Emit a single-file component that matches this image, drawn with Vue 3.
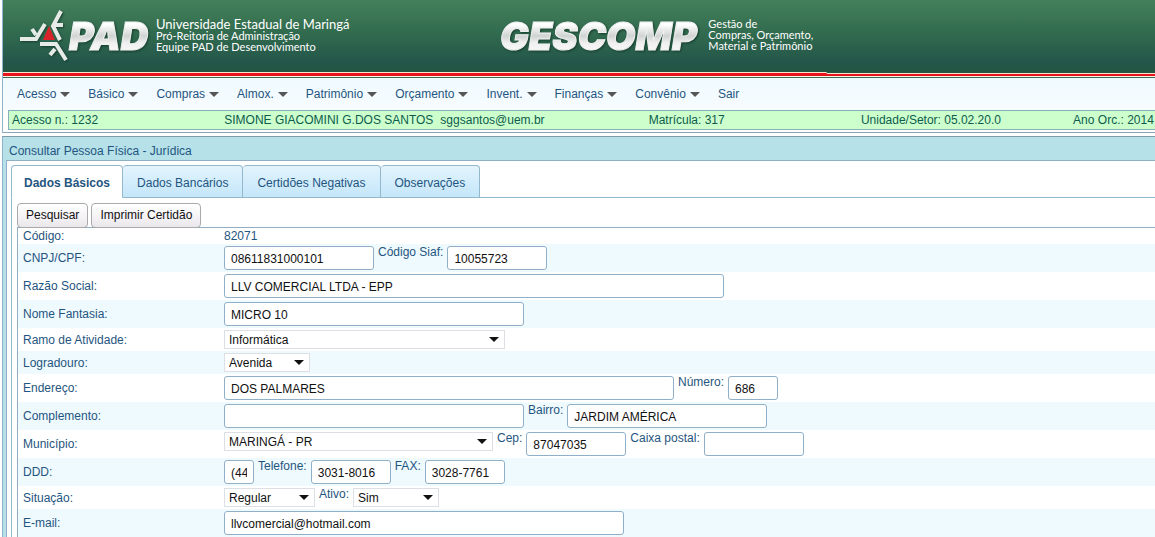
<script setup>
import { ref } from 'vue'

const menu = ['Acesso', 'Básico', 'Compras', 'Almox.', 'Patrimônio', 'Orçamento', 'Invent.', 'Finanças', 'Convênio', 'Sair']
const tabs = ['Dados Básicos', 'Dados Bancários', 'Certidões Negativas', 'Observações']
const active = ref(0)

const rows = ref([
  { label: 'CNPJ/CPF:', fields: [
    { id: 'cnpj', w: 150, value: '08611831000101' },
    { id: 'siaf', label: 'Código Siaf:', w: 100, value: '10055723' }] },
  { label: 'Razão Social:', fields: [{ id: 'razao', w: 500, value: 'LLV COMERCIAL LTDA - EPP' }] },
  { label: 'Nome Fantasia:', fields: [{ id: 'fantasia', w: 300, value: 'MICRO 10' }] },
  { label: 'Ramo de Atividade:', fields: [{ id: 'ramo', select: true, w: 281, value: 'Informática' }] },
  { label: 'Logradouro:', fields: [{ id: 'logradouro', select: true, w: 86, value: 'Avenida' }] },
  { label: 'Endereço:', fields: [
    { id: 'endereco', w: 450, value: 'DOS PALMARES' },
    { id: 'numero', label: 'Número:', w: 50, value: '686' }] },
  { label: 'Complemento:', fields: [
    { id: 'complemento', w: 300, value: '' },
    { id: 'bairro', label: 'Bairro:', w: 200, value: 'JARDIM AMÉRICA' }] },
  { label: 'Município:', fields: [
    { id: 'municipio', select: true, w: 269, value: 'MARINGÁ - PR' },
    { id: 'cep', label: 'Cep:', w: 100, value: '87047035' },
    { id: 'caixa', label: 'Caixa postal:', w: 100, value: '' }] },
  { label: 'DDD:', fields: [
    { id: 'ddd', w: 30, value: '(44' },
    { id: 'telefone', label: 'Telefone:', w: 80, value: '3031-8016' },
    { id: 'fax', label: 'FAX:', w: 80, value: '3028-7761' }] },
  { label: 'Situação:', fields: [
    { id: 'situacao', select: true, w: 91, value: 'Regular' },
    { id: 'ativo', label: 'Ativo:', select: true, w: 86, value: 'Sim' }] },
  { label: 'E-mail:', fields: [{ id: 'email', w: 400, value: 'llvcomercial@hotmail.com' }] },
])
</script>

<template>
  <div class="page">
    <div class="top">
      <header class="banner">
        <div class="brand">
          <svg class="mark" width="136" height="64" viewBox="0 0 136 64" role="img" aria-label="PAD">
            <defs>
              <linearGradient id="silver" x1="0" y1="0" x2="0" y2="1">
                <stop offset="0.25" stop-color="#ffffff" />
                <stop offset="0.5" stop-color="#cfd3d1" />
                <stop offset="0.65" stop-color="#f0f0f0" />
                <stop offset="1" stop-color="#ffffff" />
              </linearGradient>
            </defs>
            <g class="shade" fill="none" stroke="#e6ebe7" stroke-width="4">
              <path d="M43 11 L35 26 L42 40" />
              <path d="M37 25 H45" />
              <path d="M2 39 H18 L27 24" />
              <path d="M14 29 L18 35" />
              <path d="M22 44 H38 L48 60" />
              <path d="M37 49 L32 55" />
            </g>
            <path d="M31 26 L37 40 H25 Z" fill="#d8232a" />
            <text class="word" x="51" y="50" font-size="38">PAD</text>
          </svg>
          <p class="slogan"><span class="lead">Universidade Estadual de Maringá</span><span>Pró-Reitoria de Administração</span><span>Equipe PAD de Desenvolvimento</span></p>
        </div>
        <div class="brand">
          <svg class="mark" width="208" height="64" viewBox="0 0 208 64" role="img" aria-label="GESCOMP">
            <text class="word" x="2" y="50" font-size="38">GESCOMP</text>
          </svg>
          <p class="slogan"><span>Gestão de</span><span>Compras, Orçamento,</span><span>Material e Patrimônio</span></p>
        </div>
      </header>
      <div class="stripe"></div>
      <nav class="menu">
        <a v-for="(m, i) in menu" :key="m" href="#">{{ m }}<i v-if="i < menu.length - 1" class="caret"></i></a>
      </nav>
      <div class="status">
        <span>Acesso n.: 1232</span>
        <span class="user">SIMONE GIACOMINI G.DOS SANTOS<em>sggsantos@uem.br</em></span>
        <span>Matrícula: 317</span>
        <span>Unidade/Setor: 05.02.20.0</span>
        <span>Ano Orc.: 2014</span>
      </div>
    </div>
    <main class="panel">
      <h1>Consultar Pessoa Física - Jurídica</h1>
      <div class="body">
        <div class="tabs" role="tablist">
          <button v-for="(t, i) in tabs" :key="t" type="button" role="tab" :aria-selected="active === i" :class="{ on: active === i }" @click="active = i">{{ t }}</button>
        </div>
        <div class="content">
          <div class="actions">
            <button type="button">Pesquisar</button>
            <button type="button">Imprimir Certidão</button>
          </div>
          <form class="grid" @submit.prevent>
            <div class="row code"><span class="name">Código:</span><span class="cell">82071</span></div>
            <div v-for="r in rows" :key="r.label" class="row">
              <label class="name" :for="r.fields[0].id">{{ r.label }}</label>
              <div class="cell">
                <template v-for="f in r.fields" :key="f.id">
                  <label v-if="f.label" class="sub" :for="f.id">{{ f.label }}</label>
                  <span v-if="f.select" class="pick" :style="{ width: f.w + 'px' }">
                    <select :id="f.id"><option>{{ f.value }}</option></select>
                  </span>
                  <input v-else :id="f.id" v-model="f.value" type="text" :style="{ width: f.w + 'px' }">
                </template>
              </div>
            </div>
          </form>
        </div>
      </div>
    </main>
  </div>
</template>

<style>
body { margin: 0; background: #fff; }
html { overflow: hidden; }
</style>

<style scoped>
* { box-sizing: border-box; }
.page {
  font: 12px/16px "Liberation Sans", Arial, sans-serif;
  color: #1f5580;
  padding-left: 2px;
}
button, input, select { font: inherit; }
.top {
  border-left: 1px solid #8fb3cb;
  border-bottom: 1px solid #8aa5b8;
  padding-bottom: 2px;
  margin-bottom: 3px;
}
.banner {
  display: grid;
  grid-template-columns: 43% 1fr;
  height: 72px;
  background: linear-gradient(#43805a, #30694e 50%, #23554a 88%, #245642);
}
.brand { display: flex; align-items: flex-start; padding-left: 15px; }
.brand + .brand { padding-left: 0; }
.mark { flex: none; }
.shade, .word { filter: drop-shadow(1px 1px 1px #173d2d); }
.word { font-family: Inter, sans-serif; font-weight: 900; font-style: italic; fill: url(#silver); stroke: #eef0ef; stroke-width: 1; }
.slogan {
  margin: 18px 0 0 2px;
  display: flex;
  flex-direction: column;
  font: 11px/11px Lato, sans-serif;
  color: #fff;
  white-space: nowrap;
}
.slogan .lead { font-size: 13px; line-height: 12px; }
.stripe {
  height: 6px;
  background:
    linear-gradient(#fbe3d0 1px, #e8141c 1px 4px, #fff3ea 4px 5px, #3f6b50 5px) 0 0 / 71.5% 100% no-repeat,
    linear-gradient(#245642 1px, #fbe3d0 1px 2px, #e8141c 2px 4px, #fff3ea 4px 5px, #3f6b50 5px);
}
.menu {
  display: flex;
  gap: 18px;
  height: 32px;
  padding-left: 14px;
  align-items: center;
  background: linear-gradient(#effbff, #f7fbff);
}
.menu a { display: flex; align-items: center; gap: 4px; color: #1f5580; text-decoration: none; }
.caret { border: 5px solid transparent; border-top-color: #555; border-bottom: 0; margin-top: 1px; }
.status {
  display: grid;
  grid-template-columns: 5fr 10fr 5fr 5fr 2fr;
  margin-left: 5px;
  border: 1px solid #86b0b8;
  border-right: 0;
  background: #ccffcc;
  color: #0d5c4c;
  line-height: 18px;
  white-space: nowrap;
}
.status span { padding-left: 3px; min-width: 0; }
.user em { font-style: normal; margin-left: 7px; }
.panel {
  border: 1px solid #8fb3cb;
  border-top-color: #7f9aab;
  border-right: 0;
  border-bottom: 0;
  background: #b6e1e8;
  padding-left: 3px;
}
h1 { margin: 0; padding: 6px 0 1px 3px; font-size: 12px; line-height: 16px; font-weight: 400; }
.body { background: #fff; border: solid #8fb0c4; border-width: 1px 0 0 1px; padding: 4px 0 0 4px; }
.tabs { display: flex; position: relative; }
.tabs button {
  height: 33px;
  padding: 2px 14px 0;
  border: 1px solid #93b7cb;
  border-left-width: 0;
  border-radius: 4px 4px 0 0;
  background: linear-gradient(#e3f4fd, #c4e6fa);
  color: #1f5580;
}
.tabs button:first-child { border-left-width: 1px; }
.tabs .on { background: #fff; font-weight: 700; border-bottom-color: #fff; padding: 2px 12px 0; }
.content { border: solid #93b7cb; border-width: 1px 0 0 1px; margin-top: -1px; padding: 5px 0 0 5px; }
.actions { display: flex; gap: 3px; }
.actions button {
  height: 25px;
  padding: 0 8px 2px;
  border: 1px solid #aaa;
  border-radius: 4px;
  background: linear-gradient(#fff, #f6f4f6 50%, #e9e7ea);
  color: #111;
}
.grid { border: solid #93aec2; border-width: 1px 0 0 1px; margin-top: -1px; }
.row { display: grid; grid-template-columns: 206px 1fr; align-items: center; padding: 2px 0; }
.row.code { padding: 0; }
.row:nth-child(even) { background: #effaff; }
.name { padding-left: 5px; }
.cell { display: flex; align-items: flex-start; }
.sub { padding: 0 4px; line-height: 12px; }
input {
  height: 24px;
  padding: 2px 6px 0;
  border: 1px solid #8fb0c8;
  border-radius: 3px;
  background: #fff;
  color: #111;
}
.pick { position: relative; height: 19px; }
.pick::after {
  content: "";
  position: absolute;
  right: 6px;
  top: 7px;
  border: 5px solid transparent;
  border-top-color: #111;
  border-bottom: 0;
  pointer-events: none;
}
select {
  appearance: none;
  display: block;
  width: 100%;
  height: 19px;
  padding: 0 4px;
  border: 1px solid #dcdfe3;
  border-radius: 0;
  background: #fff;
  color: #111;
}
</style>
